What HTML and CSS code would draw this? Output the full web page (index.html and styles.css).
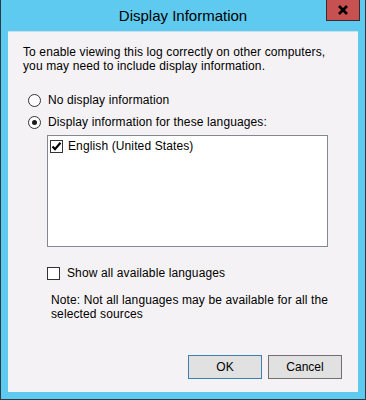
FILE: index.html
```html
<!doctype html>
<html lang="en">

<head>
    <meta charset="utf-8">
    <title>Display Information</title>

    <link rel="stylesheet" href="styles.css">
</head>

<body>
    <div class="window">
        <div class="titlebar">
            <span class="title">Display Information</span>
            <button class="close" type="button">
                <svg width="12" height="10" viewBox="0 0 12 10">
                    <path d="M2 1 L10 9 M10 1 L2 9" stroke="#000" stroke-width="2.6" />
                </svg>
            </button>
        </div>

        <div class="client">
            <p class="intro">To enable viewing this log correctly on other computers,<br>
                you may need to include display information.</p>

            <div class="radio-row">
                <span class="radio"></span>
                <span>No display information</span>
            </div>
            <div class="radio-row">
                <span class="radio checked"></span>
                <span>Display information for these languages:</span>
            </div>

            <div class="listbox">
                <div class="list-item">
                    <span class="check checked">
                        <svg width="11" height="11" viewBox="0 0 11 11">
                            <path d="M1.5 5.5 L4 8.2 L9.5 1.8" fill="none" stroke="#000" stroke-width="2.2" />
                        </svg>
                    </span>
                    <span>English (United States)</span>
                </div>
            </div>

            <div class="check-row">
                <span class="check"></span>
                <span>Show all available languages</span>
            </div>

            <p class="note">Note: Not all languages may be available for all the<br>
                selected sources</p>

            <div class="buttons">
                <button class="btn default" type="button">OK</button>
                <button class="btn" type="button">Cancel</button>
            </div>
        </div>
    </div>
</body>

</html>
```

FILE: styles.css
```css
body {
    margin: 0;
    font-family: "Liberation Sans", Arial, sans-serif;
    font-size: 12px;
    letter-spacing: 0.12px;
    color: #000;
}

.window {
    width: 366px;
    height: 400px;
    box-sizing: border-box;
    background-color: #5fcaef;
    border: 1px solid #2b3b43;
    border-top: none;
    padding: 0 7px 7px 7px;
    display: flex;
    flex-direction: column;
    position: relative;
}

.titlebar {
    height: 31px;
    display: flex;
    align-items: center;
    justify-content: center;
    flex-shrink: 0;
}

.title {
    font-size: 15px;
    letter-spacing: 0;
    margin-top: -1px;
}

.close {
    position: absolute;
    top: 0;
    right: 5px;
    width: 34px;
    height: 21px;
    box-sizing: border-box;
    border: 1px solid #3d2a2a;
    border-top: none;
    background-color: #c75050;
    padding: 0;
    display: flex;
    align-items: center;
    justify-content: center;
}

.client {
    flex: 1;
    background-color: #f5f2f5;
    border-top: 1px solid #c8dfec;
    display: flex;
    flex-direction: column;
}

.intro {
    margin: 13px 0 0 15px;
    line-height: 14px;
}

.radio-row {
    display: flex;
    align-items: center;
    height: 22px;
    margin-left: 20px;
    gap: 7px;
}

.radio-row:first-of-type {
    margin-top: 16px;
}

.radio {
    width: 13px;
    height: 13px;
    box-sizing: border-box;
    border: 1px solid #333;
    border-radius: 50%;
    background-color: #fff;
    display: flex;
    align-items: center;
    justify-content: center;
}

.radio.checked::after {
    content: "";
    width: 5px;
    height: 5px;
    border-radius: 50%;
    background-color: #1a1a1a;
}

.listbox {
    margin: 2px 0 0 39px;
    width: 281px;
    height: 112px;
    box-sizing: border-box;
    border: 1px solid #828790;
    background-color: #fff;
    padding: 2px 0 0 2px;
}

.list-item {
    display: flex;
    align-items: center;
    height: 16px;
    gap: 5px;
}

.check {
    width: 13px;
    height: 13px;
    box-sizing: border-box;
    border: 1px solid #333;
    background-color: #fff;
    display: flex;
    align-items: center;
    justify-content: center;
}

.check-row {
    display: flex;
    align-items: center;
    height: 16px;
    gap: 7px;
    margin: 18px 0 0 39px;
}

.note {
    margin: 12px 0 0 43px;
    line-height: 14px;
}

.buttons {
    margin-top: auto;
    padding: 0 16px 13px 0;
    display: flex;
    justify-content: flex-end;
    gap: 6px;
}

.btn {
    width: 74px;
    height: 24px;
    box-sizing: border-box;
    border: 1px solid #707070;
    background-color: #e1e1e1;
    font-family: inherit;
    font-size: 12px;
    color: #000;
    padding: 0;
}

.btn.default {
    border-color: #3c7fb1;
}
```
